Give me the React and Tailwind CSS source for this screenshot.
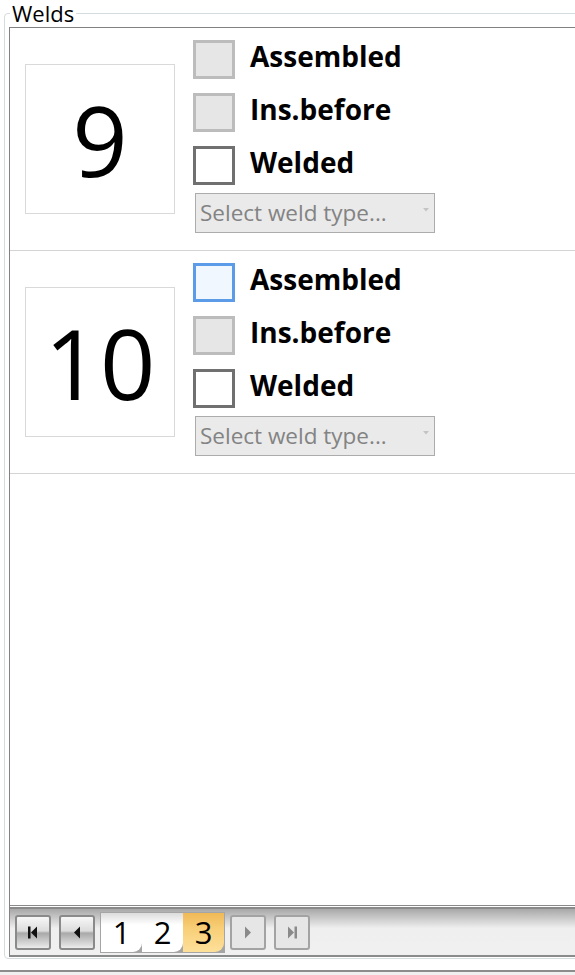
import React from "react";

function Check({ label, variant }) {
  const box =
    variant === "focus"
      ? "bg-[#f1f7ff] border-[#5b9be8]"
      : variant === "disabled"
      ? "bg-[#e6e6e6] border-[#bcbcbc]"
      : "bg-white border-[#707070]";
  return (
    <div className="flex items-center h-[39px]">
      <div className={`w-[42px] h-[39px] border-[3px] ${box}`} />
      <span className="ml-[15px] mb-[8px] text-[28px] font-bold leading-none text-black">{label}</span>
    </div>
  );
}

function Select() {
  return (
    <div className="ml-[2px] mt-[8px] w-[240px] h-[40px] border border-[#acacac] bg-[#eaeaea] flex items-center justify-between pl-[4px] pr-[5px]">
      <span className="text-[22.5px] leading-none text-[#838383]">Select weld type...</span>
      <svg width="6" height="4" viewBox="0 0 6 4" className="mb-[6px]">
        <path d="M0 0 L6 0 L3 3.5 Z" fill="#c4c4c4" />
      </svg>
    </div>
  );
}

function Row({ num, focused }) {
  return (
    <div className="flex items-start h-[223px] shrink-0 border-b border-[#d4d4d4] pl-[15px]">
      <div className="mt-[36px] w-[150px] h-[150px] border border-[#d9d9d9] flex items-center justify-center text-[97px] leading-none text-black">
        {num}
      </div>
      <div className="ml-[18px] pt-[12px] flex flex-col gap-[14px]">
        <Check label="Assembled" variant={focused ? "focus" : "disabled"} />
        <Check label="Ins.before" variant="disabled" />
        <div className="flex flex-col">
          <Check label="Welded" variant="normal" />
          <Select />
        </div>
      </div>
    </div>
  );
}

function NavButton({ enabled, children }) {
  const cls = enabled
    ? "border-[#8a8a8a] bg-[linear-gradient(to_bottom,#f7f7f7_0%,#dcdcdc_45%,#a9a9a9_52%,#c8c8c8_75%,#ececec_100%)]"
    : "border-[#a3a3a3] bg-[#e6e6e6]";
  return (
    <div className={`w-[36px] h-[35px] border-2 rounded-[3px] flex items-center justify-center ${cls}`}>
      {children}
    </div>
  );
}

function Page({ n, active }) {
  const cls = active
    ? "bg-[linear-gradient(to_bottom,#f0b957_0%,#f8cf78_40%,#fde09a_100%)]"
    : "bg-[linear-gradient(to_bottom,#dcdcdc_0%,#ffffff_30%,#ffffff_100%)]";
  return (
    <div className={`w-[41px] h-[39px] rounded-br-[9px] flex items-center justify-center text-[31px] leading-none text-black ${cls}`}>
      {n}
    </div>
  );
}

export default function App() {
  return (
    <div className="w-[575px] h-[975px] bg-white overflow-hidden flex flex-col font-['Open_Sans','Noto_Sans',sans-serif]">
      <fieldset className="ml-[4px] w-[620px] border border-[#d5dce0] rounded-[4px] pl-[4px] pb-[1px]">
        <legend className="ml-[1px] px-[2px] text-[22px] leading-[26px] text-black">Welds</legend>
        <div className="mt-[1px] h-[930px] flex flex-col border-t border-l border-[#828282]">
          <div className="flex-1 flex flex-col border-b border-[#8a8a8a]">
            <Row num="9" />
            <Row num="10" focused />
          </div>
          <div className="h-[1px] shrink-0 bg-white" />
          <div className="h-[50px] shrink-0 border-y-2 border-[#8a8a8a] bg-[linear-gradient(to_bottom,#a8a8a8_0%,#efefef_42%,#f0f0f0_100%)] flex items-center pl-[5px]">
            <NavButton enabled>
              <svg width="12" height="13" viewBox="0 0 12 13">
                <rect x="1" y="0.5" width="2.5" height="12" fill="#111" />
                <path d="M10 0.5 L10 12.5 L4 6.5 Z" fill="#111" />
              </svg>
            </NavButton>
            <div className="ml-[8px]">
              <NavButton enabled>
                <svg width="8" height="13" viewBox="0 0 8 13">
                  <path d="M7 0.5 L7 12.5 L1 6.5 Z" fill="#111" />
                </svg>
              </NavButton>
            </div>
            <div className="ml-[5px] flex bg-[#a5a5a5] p-[1px]">
              <Page n="1" />
              <Page n="2" />
              <Page n="3" active />
            </div>
            <div className="ml-[5px]">
              <NavButton>
                <svg width="8" height="13" viewBox="0 0 8 13">
                  <path d="M1 0.5 L1 12.5 L7 6.5 Z" fill="#8a8a8a" />
                </svg>
              </NavButton>
            </div>
            <div className="ml-[8px]">
              <NavButton>
                <svg width="12" height="13" viewBox="0 0 12 13">
                  <path d="M2 0.5 L2 12.5 L8 6.5 Z" fill="#8a8a8a" />
                  <rect x="8.5" y="0.5" width="2.5" height="12" fill="#8a8a8a" />
                </svg>
              </NavButton>
            </div>
          </div>
        </div>
      </fieldset>
      <div className="mt-[11px] h-[2px] shrink-0 bg-[#8c8c8c]" />
      <div className="flex-1 bg-[#f0f0f0]" />
    </div>
  );
}
